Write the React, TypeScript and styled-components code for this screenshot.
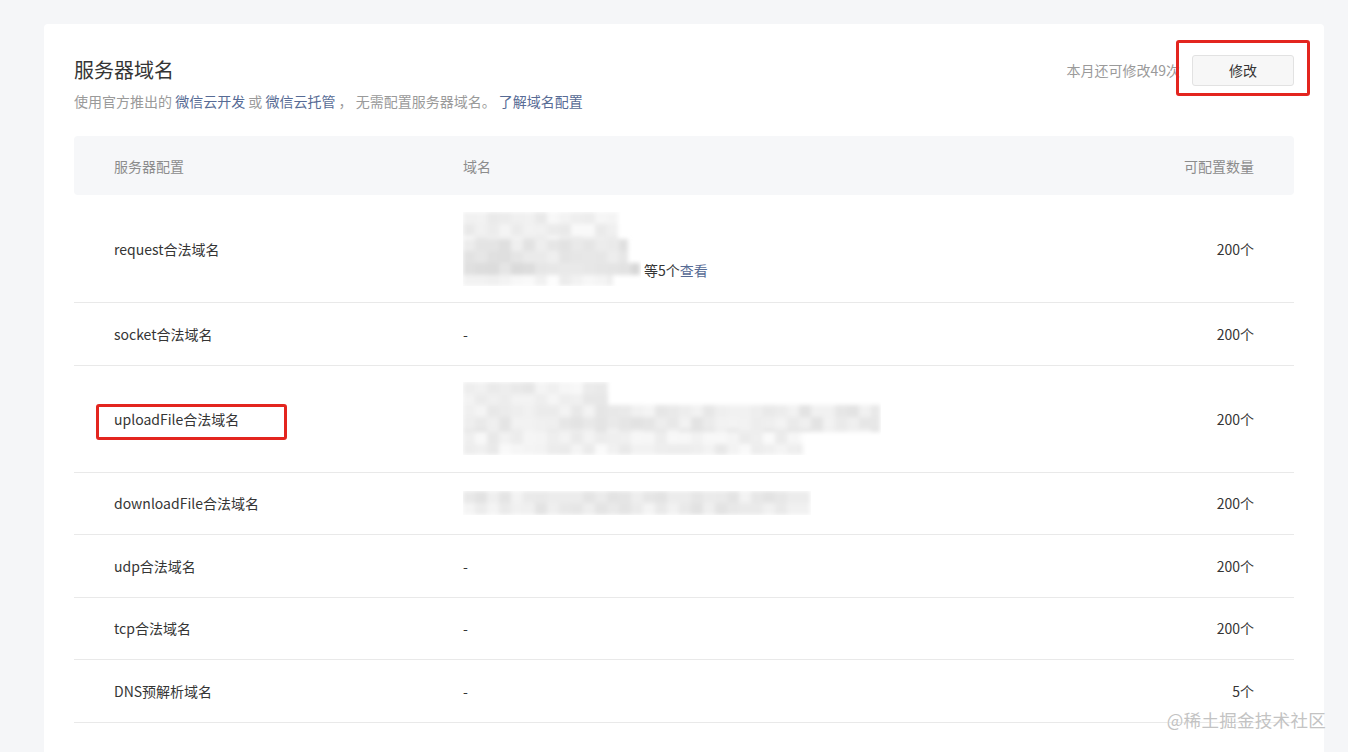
import React from 'react';
import styled, { createGlobalStyle } from 'styled-components';

/* ── global ── */

const GlobalStyle = createGlobalStyle`
  html, body {
    margin: 0;
    padding: 0;
    height: 100%;
    overflow: hidden;
    background: #f5f6f8;
  }
  body {
    font-family: "Noto Sans CJK SC", "Noto Sans", sans-serif;
    color: #353535;
  }
`;

/* ── styled components ── */

const Page = styled.div`
  position: relative;
  height: 100vh;
  padding: 24px 24px 0 44px;
  box-sizing: border-box;
`;

const Card = styled.section`
  background: #fff;
  border-radius: 4px;
  padding: 32px 30px 60px;
  min-height: 760px;
  box-sizing: border-box;
`;

const TopBar = styled.div`
  display: flex;
  justify-content: space-between;
  align-items: flex-start;
`;

const TitleBlock = styled.div`
  display: flex;
  flex-direction: column;
`;

const Title = styled.h2`
  margin: 0;
  font-size: 20px;
  line-height: 28px;
  font-weight: 400;
  color: #353535;
`;

const Desc = styled.p`
  margin: 7px 0 0;
  font-size: 14px;
  line-height: 20px;
  color: #9a9a9a;
  white-space: pre;
`;

const Link = styled.a`
  color: #576b95;
  text-decoration: none;
  cursor: pointer;
`;

const Actions = styled.div`
  display: flex;
  align-items: center;
  height: 28px;
`;

const Quota = styled.span`
  font-size: 14px;
  color: #9a9a9a;
  margin-right: 12px;
`;

const Marked = styled.span`
  position: relative;
  display: inline-flex;
`;

const RedFrame = styled.span<{ $l: number; $t: number; $w: number; $h: number }>`
  position: absolute;
  left: ${(p) => p.$l}px;
  top: ${(p) => p.$t}px;
  width: ${(p) => p.$w}px;
  height: ${(p) => p.$h}px;
  border: 3px solid #e3251f;
  border-radius: 3px;
  box-sizing: border-box;
  pointer-events: none;
`;

const Button = styled.button`
  width: 102px;
  height: 31px;
  border: 1px solid #e2e2e2;
  border-radius: 3px;
  background: #f7f7f7;
  font-family: inherit;
  font-size: 14px;
  color: #353535;
  cursor: pointer;
`;

const Table = styled.div`
  margin-top: 25px;
`;

const Grid = styled.div`
  display: grid;
  grid-template-columns: 389px 1fr 200px;
  align-items: center;
`;

const HeadRow = styled(Grid)`
  height: 59px;
  background: #f6f7f9;
  border-radius: 4px;
  font-size: 14px;
  color: #8c8c8c;
`;

const Row = styled(Grid)<{ $tall?: boolean }>`
  min-height: 62.5px;
  padding: ${(p) => (p.$tall ? '16.5px 0' : '16px 0')};
  box-sizing: border-box;
  border-bottom: 1px solid #e9e9e9;
  font-size: 14px;
  line-height: 20px;
  color: #353535;
`;

const Label = styled.div`
  padding-left: 40px;
  display: flex;
`;

const Value = styled.div`
  display: flex;
  align-items: flex-end;
`;

const Count = styled.div`
  text-align: right;
  padding-right: 40px;
`;

const More = styled.span`
  margin: 0 0 6px 3px;
`;

const Watermark = styled.div`
  position: absolute;
  right: 22px;
  bottom: 20px;
  font-size: 17.5px;
  line-height: 24px;
  color: #c3c3c3;
  text-shadow: 0 0 1px rgba(255, 255, 255, 0.9);
  letter-spacing: 0.3px;
`;

/* ── mosaic (blurred domain list) ── */

type Rect = [number, number, number, number, number];

function seeded(seed: number) {
  let s = seed;
  return () => {
    s = (s * 9301 + 49297) % 233280;
    return s / 233280;
  };
}

const Mosaic: React.FC<{ w: number; h: number; rects: Rect[]; seed: number }> = ({ w, h, rects, seed }) => {
  const rnd = seeded(seed);
  const cells: React.ReactNode[] = [];
  const size = 12;
  rects.forEach(([x, y, rw, rh, base], ri) => {
    for (let cy = y; cy < y + rh; cy += size) {
      for (let cx = x; cx < x + rw; cx += size) {
        const v = Math.round(base + rnd() * 18);
        const cw = Math.min(size, x + rw - cx);
        const ch = Math.min(size, y + rh - cy);
        cells.push(
          <rect key={`${ri}-${cx}-${cy}`} x={cx} y={cy} width={cw} height={ch} fill={`rgb(${v},${v},${v})`} />
        );
      }
    }
  });
  const id = `mb${seed}`;
  return (
    <svg width={w} height={h} viewBox={`0 0 ${w} ${h}`} style={{ display: 'block' }}>
      <defs>
        <filter id={id} x="-5%" y="-10%" width="110%" height="120%">
          <feGaussianBlur stdDeviation="2" />
        </filter>
      </defs>
      <g filter={`url(#${id})`}>{cells}</g>
    </svg>
  );
};

/* ── data ── */

const rows: { label: string; value: React.ReactNode; count: string; marked?: boolean; tall?: boolean }[] = [
  {
    label: 'request合法域名',
    tall: true,
    value: (
      <>
        <Mosaic
          w={178}
          h={74}
          seed={7}
          rects={[
            [0, 0, 155, 27, 232],
            [0, 27, 165, 24, 222],
            [0, 51, 177, 12, 216],
            [0, 63, 150, 11, 236],
          ]}
        />
        <More>
          等5个<Link>查看</Link>
        </More>
      </>
    ),
    count: '200个',
  },
  { label: 'socket合法域名', value: '-', count: '200个' },
  {
    label: 'uploadFile合法域名',
    marked: true,
    tall: true,
    value: (
      <Mosaic
        w={418}
        h={73}
        seed={31}
        rects={[
          [0, 0, 145, 23, 230],
          [0, 23, 417, 27, 226],
          [0, 50, 340, 23, 232],
        ]}
      />
    ),
    count: '200个',
  },
  {
    label: 'downloadFile合法域名',
    value: <Mosaic w={348} h={24} seed={53} rects={[[0, 0, 347, 24, 226]]} />,
    count: '200个',
  },
  { label: 'udp合法域名', value: '-', count: '200个' },
  { label: 'tcp合法域名', value: '-', count: '200个' },
  { label: 'DNS预解析域名', value: '-', count: '5个' },
];

/* ── component ── */

const App: React.FC = () => {
  return (
    <>
      <GlobalStyle />
      <Page>
        <Card>
          <TopBar>
            <TitleBlock>
              <Title>服务器域名</Title>
              <Desc>
                使用官方推出的 <Link>微信云开发</Link> 或 <Link>微信云托管</Link> ， 无需配置服务器域名。 <Link>了解域名配置</Link>
              </Desc>
            </TitleBlock>
            <Actions>
              <Quota>本月还可修改49次</Quota>
              <Marked>
                <Button>修改</Button>
                <RedFrame $l={-16} $t={-15} $w={134} $h={56} />
              </Marked>
            </Actions>
          </TopBar>

          <Table>
            <HeadRow>
              <Label>服务器配置</Label>
              <Value>域名</Value>
              <Count>可配置数量</Count>
            </HeadRow>
            {rows.map((r) => (
              <Row key={r.label} $tall={r.tall}>
                <Label>
                  {r.marked ? (
                    <Marked>
                      {r.label}
                      <RedFrame $l={-18} $t={-5} $w={191} $h={36} />
                    </Marked>
                  ) : (
                    r.label
                  )}
                </Label>
                <Value>{r.value}</Value>
                <Count>{r.count}</Count>
              </Row>
            ))}
          </Table>
        </Card>
        <Watermark>@稀土掘金技术社区</Watermark>
      </Page>
    </>
  );
};

export default App;
